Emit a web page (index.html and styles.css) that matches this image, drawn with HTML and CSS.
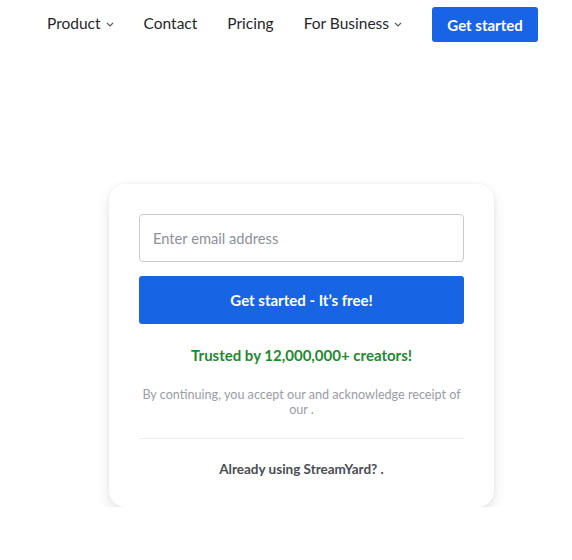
FILE: index.html
```html
<!DOCTYPE html>
<html>
<head>
<meta charset="utf-8">
<link rel="stylesheet" href="styles.css">
</head>
<body>
<nav class="nav">
  <a class="nav-item">Product <svg class="chev" width="8" height="5" viewBox="0 0 8 5"><path d="M1 1l3 3 3-3" fill="none" stroke="#555" stroke-width="1.1"/></svg></a>
  <a class="nav-item">Contact</a>
  <a class="nav-item">Pricing</a>
  <a class="nav-item">For Business <svg class="chev" width="8" height="5" viewBox="0 0 8 5"><path d="M1 1l3 3 3-3" fill="none" stroke="#555" stroke-width="1.1"/></svg></a>
  <button class="nav-btn">Get started</button>
</nav>
<main class="card">
  <div class="input">Enter email address</div>
  <button class="cta">Get started - It’s free!</button>
  <p class="trusted">Trusted by 12,000,000+ creators!</p>
  <p class="legal">By continuing, you accept our and acknowledge receipt of our .</p>
  <hr class="divider">
  <p class="already">Already using StreamYard? .</p>
</main>
</body>
</html>
```
FILE: styles.css
```css
html, body { margin: 0; background: #fff; }
body { font-family: Lato, "Open Sans", sans-serif; color: #222; }
.nav {
  display: flex;
  align-items: center;
  gap: 30px;
  padding: 7px 0 0 47px;
  height: 35px;
}
.nav-item {
  font-size: 15.5px;
  color: #25262b;
  display: flex;
  align-items: center;
  gap: 5px;
  line-height: 1;
  margin-top: -1px;
}
.chev { margin-top: 1px; }
.nav-btn {
  width: 106px;
  height: 35px;
  background: #1863e6;
  color: #fff;
  border: 0;
  border-radius: 3px;
  font-family: inherit;
  font-weight: 700;
  font-size: 15px;
}
.card {
  margin: 142px 0 0 109px;
  width: 385px;
  box-sizing: border-box;
  padding: 30px 30px 27px;
  border-radius: 16px;
  background: #fff;
  box-shadow: 0 6px 14px rgba(0,0,0,0.10), 0 0 4px rgba(0,0,0,0.05);
  display: flex;
  flex-direction: column;
}
.input {
  height: 48px;
  box-sizing: border-box;
  border: 1px solid #c9cbd0;
  border-radius: 4px;
  padding: 0 13px;
  display: flex;
  align-items: center;
  font-size: 14.7px;
  color: #8e909a;
}
.cta {
  margin-top: 14px;
  height: 48px;
  border: 0;
  border-radius: 3px;
  background: #1765e3;
  color: #fff;
  font-family: inherit;
  font-weight: 700;
  font-size: 15px;
}
.trusted {
  margin: 22px 0 0;
  text-align: center;
  color: #1d8a30;
  font-weight: 700;
  font-size: 15px;
  line-height: 18px;
}
.legal {
  margin: 23px 0 0;
  text-align: center;
  color: #9a9ca6;
  font-size: 12.6px;
  line-height: 15px;
}
.divider {
  margin: 21px 0 0;
  border: 0;
  border-top: 1px solid #ececee;
}
.already {
  margin: 23px 0 3px;
  text-align: center;
  color: #4a4c55;
  font-weight: 700;
  font-size: 13.5px;
  line-height: 15px;
}
```
